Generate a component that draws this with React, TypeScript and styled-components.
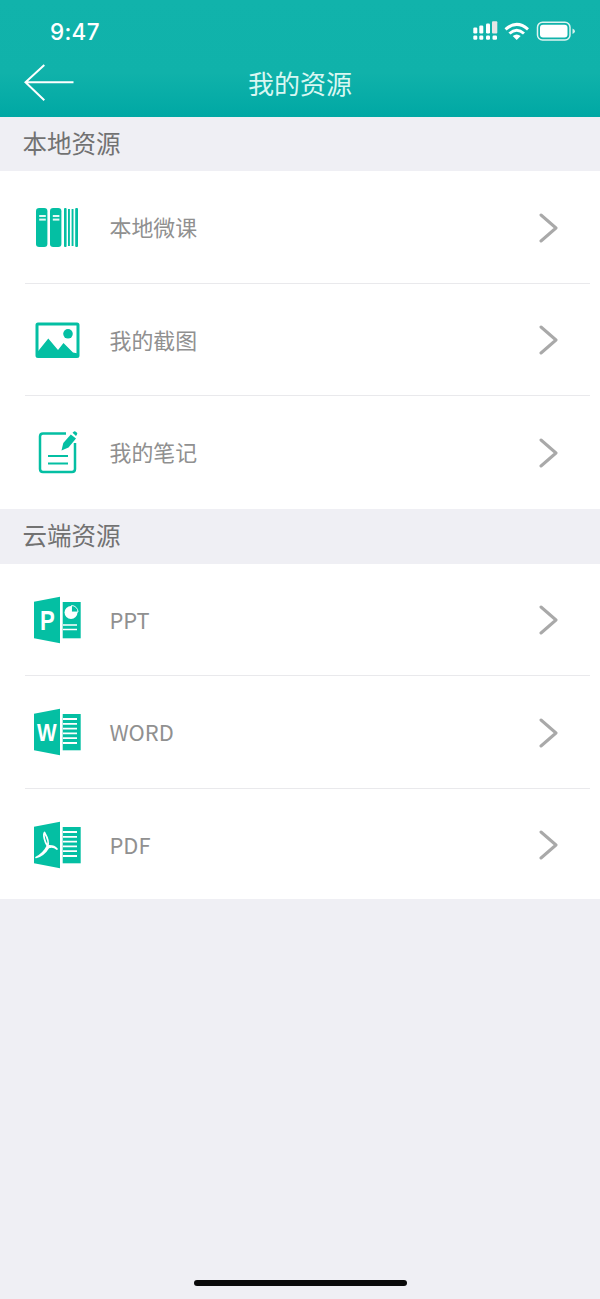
import React from "react";
import styled, { createGlobalStyle } from "styled-components";

const Global = createGlobalStyle`
  html, body { margin: 0; padding: 0; background: #efeff4; }
  #root { width: 600px; height: 1299px; overflow: hidden; }
`;
const CJK = `"Noto Sans CJK SC", "Liberation Sans", sans-serif`;
const TEAL = "#04bfa3";

const Page = styled.div`
  position: relative; width: 600px; height: 1299px; background: #efeff4;
  display: flex; flex-direction: column; font-family: ${CJK};
`;
const Header = styled.header`
  height: 117px; flex: none; display: flex; flex-direction: column;
  background: linear-gradient(180deg, #11b3ab 0%, #10b2aa 62%, #00a8a4 100%);
`;
const StatusBar = styled.div`
  height: 60px; flex: none; display: flex; align-items: center; justify-content: space-between;
  padding: 3px 23px 0 50px; box-sizing: border-box;
`;
const Time = styled.span`
  font: 500 22.5px/1 Inter, "Liberation Sans", sans-serif; color: #fff; letter-spacing: 0.3px;
  margin-top: 1px;
`;
const StatusIcons = styled.svg`display: block; width: 104px; height: 24px;`;
const NavBar = styled.div`
  flex: 1; display: grid; grid-template-columns: 100px 1fr 100px; align-items: center;
`;
const BackIcon = styled.svg`display: block; width: 60px; height: 44px; margin-left: 20px; margin-top: -14px;`;
const Title = styled.h1`
  margin: -12px 0 0; text-align: center; font: 400 26px/1 ${CJK}; color: #d9f7f2;
`;
const SectionTitle = styled.div<{ $h: number }>`
  height: ${p => p.$h}px; flex: none; display: flex; align-items: center; box-sizing: border-box;
  padding: 0 0 4px 22.5px; font-size: 24.5px; color: #727272;
`;
const Card = styled.section`background: #fff; flex: none; display: flex; flex-direction: column;`;
const Row = styled.div<{ $h: number; $pt?: number; $last?: boolean }>`
  position: relative; height: ${p => p.$h}px; flex: none; display: flex; align-items: center;
  box-sizing: border-box; padding: ${p => p.$pt ?? 0}px 41px 0 27px;
  &::after {
    content: ""; display: ${p => (p.$last ? "none" : "block")};
    position: absolute; left: 25px; right: 10px; bottom: 0; height: 1px; background: #e9e9ec;
  }
`;
const RowIcon = styled.svg`display: block; width: 60px; height: 50px; flex: none;`;
const Label = styled.span`
  margin-left: 22.5px; flex: 1; font: 400 21.9px/1 ${CJK}; color: #909090;
`;
const Chevron = styled.svg`display: block; width: 20px; height: 32px; flex: none; margin-top: 1px;`;
const HomeBar = styled.div`
  position: absolute; left: 194px; top: 1280px; width: 213px; height: 6px; border-radius: 3px; background: #0a0a0a;
`;
const LetterText = styled.text`
  font-family: "Liberation Sans", sans-serif; font-weight: 700; fill: #fff;
`;

const Books = () => (
  <RowIcon viewBox="27 202 60 50">
    <g fill={TEAL}>
      <rect x="36" y="208" width="11.4" height="39" rx="3.2" />
      <rect x="50" y="208" width="11.4" height="39" rx="3.2" />
      <rect x="64" y="208" width="2.6" height="39" rx="1" />
      <rect x="68" y="209" width="1.9" height="37" />
      <rect x="71.6" y="209" width="1.9" height="37" />
      <rect x="75.2" y="208" width="2.8" height="39" rx="1" />
    </g>
    <g fill="#e4f8f4">
      <rect x="39.2" y="215" width="6.6" height="2" />
      <rect x="39.2" y="218.6" width="6.6" height="2" />
      <rect x="52.8" y="215" width="6.6" height="2" />
      <rect x="52.8" y="218.6" width="6.6" height="2" />
    </g>
  </RowIcon>
);
const Picture = () => (
  <RowIcon viewBox="27 314.5 60 50">
    <rect x="37" y="323.5" width="41" height="32.5" rx="1" fill="#fff" stroke={TEAL} strokeWidth="3" />
    <circle cx="68" cy="333.3" r="4.8" fill={TEAL} />
    <path d="M37 353 V352 L48.3 338 L58 349.5 L63.5 342.5 L73 352 L78 353 V356 H37 Z" fill={TEAL} />
  </RowIcon>
);
const Note = () => (
  <RowIcon viewBox="27 427 60 50">
    <path d="M66 433.5 H43 Q40 433.5 40 436.5 V469 Q40 472 43 472 H72 Q75 472 75 469 V443" fill="none" stroke={TEAL} strokeWidth="2.5" />
    <path d="M48 456 H68 M48 463.5 H68" stroke={TEAL} strokeWidth="2.2" />
    <path d="M61.5 450.5 L63.3 443 L70.8 434.5 L76 438.5 L68.5 447.5 Z" fill={TEAL} />
    <path d="M72.5 432.8 L74 431.5 Q75 431 75.8 431.8 L77 432.8 Q77.6 433.6 77 434.6 L76 436 Z" fill={TEAL} />
  </RowIcon>
);
const Door = () => <path d="M34 601.7 L60 596.7 V643.2 L34 638.2 Z" fill={TEAL} />;
const Sheet = () => <rect x="62.7" y="602" width="18" height="36.3" fill={TEAL} />;
const Ppt = () => (
  <RowIcon viewBox="27 595 60 50">
    <Door />
    <Sheet />
    <LetterText transform="translate(40 630) scale(0.82 1)" x="0" y="0" fontSize="27">P</LetterText>
    <circle cx="71" cy="612.5" r="6.5" fill="#fff" />
    <path d="M71.5 612 V605.5 A6.5 6.5 0 0 1 78 612 Z" fill={TEAL} stroke="#fff" strokeWidth="0.9" />
    <path d="M63 625 H77 M63 629.5 H77" stroke="#fff" strokeWidth="1.6" />
  </RowIcon>
);
const Lines = () => (
  <path d="M63 607 H77 M63 611.8 H77 M63 616.6 H77 M63 621.4 H77 M63 626.2 H77 M63 631 H77" stroke="#fff" strokeWidth="1.8" />
);
const Word = () => (
  <RowIcon viewBox="27 595 60 50">
    <Door />
    <Sheet />
    <Lines />
    <LetterText transform="translate(37 628.5) scale(0.85 1)" x="0" y="0" fontSize="24.5">W</LetterText>
  </RowIcon>
);
const Pdf = () => (
  <RowIcon viewBox="27 595 60 50">
    <Door />
    <Sheet />
    <Lines />
    <g fill="none" stroke="#fff" strokeLinecap="round" strokeLinejoin="round">
      <path d="M44.5 607.5 C42.8 610 44.8 617 47.5 621 C49.8 617 46.5 611 44.5 607.5 Z" strokeWidth="1.7" />
      <path d="M47.5 621 C45 626 41.5 630 36 632.5 C41 631 45.5 627.5 48.5 622.5 C51.5 621.5 54.5 622 57 624 C54.5 621 51 620.5 47.5 621 Z" strokeWidth="1.7" />
    </g>
  </RowIcon>
);

const Arrow = () => (
  <Chevron viewBox="0 0 20 32">
    <path d="M2 3 L17 16 L2 29" fill="none" stroke="#a9a9a9" strokeWidth="3" strokeLinecap="round" strokeLinejoin="round" />
  </Chevron>
);

type Item = { icon: React.ReactNode; label: string; h: number; pt?: number };
const local: Item[] = [
  { icon: <Books />, label: "本地微课", h: 112.5 },
  { icon: <Picture />, label: "我的截图", h: 112.5 },
  { icon: <Note />, label: "我的笔记", h: 112.5 },
];
const cloud: Item[] = [
  { icon: <Ppt />, label: "PPT", h: 112.5 },
  { icon: <Word />, label: "WORD", h: 112.5 },
  { icon: <Pdf />, label: "PDF", h: 110.5, pt: 2 },
];

const List = ({ items }: { items: Item[] }) => (
  <Card>
    {items.map((it, i) => (
      <Row key={it.label} $h={it.h} $pt={it.pt} $last={i === items.length - 1}>
        {it.icon}
        <Label>{it.label}</Label>
        <Arrow />
      </Row>
    ))}
  </Card>
);

export default function App() {
  return (
    <Page>
      <Global />
      <Header>
        <StatusBar>
          <Time>9:47</Time>
          <StatusIcons viewBox="0 0 104 24">
            <g fill="#fff">
              <rect x="0.3" y="7.5" width="4" height="6" rx="1.2" />
              <rect x="6.3" y="5.5" width="4" height="8" rx="1.2" />
              <rect x="13" y="3.5" width="4" height="10" rx="1.2" />
              <rect x="19" y="1.2" width="5.3" height="12.3" rx="1" fill="#e6e6e6" />
              <rect x="0.3" y="15.5" width="4" height="4.3" rx="1.2" />
              <rect x="6.3" y="15.5" width="4" height="4.3" rx="1.2" />
              <rect x="13" y="15.5" width="4" height="4.3" rx="1.2" />
              <rect x="19.5" y="15.5" width="4.5" height="4.3" rx="1.2" />
              <path d="M43.7 20 L39.7 16 Q43.7 13 47.7 16 Z" />
            </g>
            <g fill="none" stroke="#fff" strokeWidth="3">
              <path d="M32.5 9.3 Q43.7 -0.5 55 9.3" />
              <path d="M36.5 13.5 Q43.7 7 51 13.5" />
            </g>
            <rect x="64.5" y="2.2" width="32.5" height="17.8" rx="5" fill="none" stroke="#dff4f1" strokeWidth="1.5" />
            <rect x="67" y="4.7" width="27.5" height="12.8" rx="3" fill="#fff" />
            <path d="M99.5 8.5 Q102 9.5 102 11.2 Q102 13 99.5 14 Z" fill="#d5f1ed" />
          </StatusIcons>
        </StatusBar>
        <NavBar>
          <BackIcon viewBox="20 60 60 44">
            <path d="M73.5 82.3 H26 M44.3 65 L25.5 82.3 L44.3 100.3" fill="none" stroke="#fff" strokeWidth="2" />
          </BackIcon>
          <Title>我的资源</Title>
        </NavBar>
      </Header>
      <SectionTitle $h={54}>本地资源</SectionTitle>
      <List items={local} />
      <SectionTitle $h={55}>云端资源</SectionTitle>
      <List items={cloud} />
      <HomeBar />
    </Page>
  );
}
